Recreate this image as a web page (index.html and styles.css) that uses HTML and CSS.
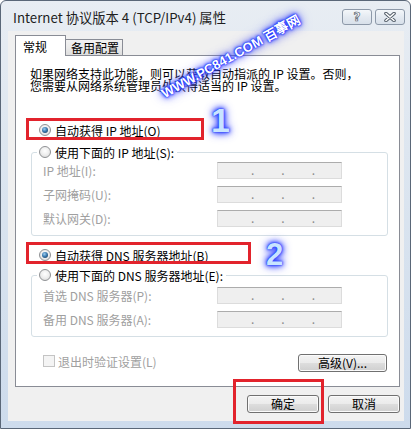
FILE: index.html
```html
<!DOCTYPE html>
<html lang="zh-CN">
<head>
  <meta charset="UTF-8">
  <title>Internet 协议版本 4 (TCP/IPv4) 属性</title>
  <link rel="stylesheet" href="styles.css">
</head>
<body>

<div class="window">
  <div class="titlebar">
    <span class="title">Internet 协议版本 4 (TCP/IPv4) 属性</span>
    <div class="title-btns">
      <span class="tbtn tbtn-help">?</span>
      <span class="tbtn">
        <svg width="14" height="10" viewBox="0 0 14 10">
          <path d="M3 1.5 L11 8.5 M11 1.5 L3 8.5" stroke="#56606c" stroke-width="3.6" stroke-linecap="round"/>
          <path d="M3 1.5 L11 8.5 M11 1.5 L3 8.5" stroke="#fff" stroke-width="1.6" stroke-linecap="round"/>
        </svg>
      </span>
    </div>
  </div>

  <div class="client">
    <div class="tabs">
      <span class="tab active">常规</span>
      <span class="tab">备用配置</span>
    </div>

    <div class="panel">
      <p class="intro">如果网络支持此功能，则可以获取自动指派的 IP 设置。否则，<br>您需要从网络系统管理员处获得适当的 IP 设置。</p>

      <div class="radio-row"><span class="radio checked"></span>自动获得 IP 地址(O)</div>

      <div class="group">
        <div class="legend"><span class="radio"></span>使用下面的 IP 地址(S):</div>
        <div class="rows">
          <div class="field-row">
            <span class="field-label">IP 地址(I):</span>
            <span class="field"><i>.</i><i>.</i><i>.</i></span>
          </div>
          <div class="field-row">
            <span class="field-label">子网掩码(U):</span>
            <span class="field"><i>.</i><i>.</i><i>.</i></span>
          </div>
          <div class="field-row">
            <span class="field-label">默认网关(D):</span>
            <span class="field"><i>.</i><i>.</i><i>.</i></span>
          </div>
        </div>
      </div>

      <div class="radio-row dns-auto"><span class="radio checked"></span>自动获得 DNS 服务器地址(B)</div>

      <div class="group group-dns">
        <div class="legend"><span class="radio"></span>使用下面的 DNS 服务器地址(E):</div>
        <div class="rows">
          <div class="field-row">
            <span class="field-label">首选 DNS 服务器(P):</span>
            <span class="field"><i>.</i><i>.</i><i>.</i></span>
          </div>
          <div class="field-row">
            <span class="field-label">备用 DNS 服务器(A):</span>
            <span class="field"><i>.</i><i>.</i><i>.</i></span>
          </div>
        </div>
      </div>

      <div class="check-row">
        <span class="check-item"><span class="checkbox"></span>退出时验证设置(L)</span>
        <button class="btn btn-adv">高级(V)...</button>
      </div>
    </div>

    <div class="dialog-btns">
      <button class="btn">确定</button>
      <button class="btn">取消</button>
    </div>
  </div>

  <!-- annotations drawn over the dialog -->
  <div class="mark mark-1"></div>
  <div class="mark mark-2"></div>
  <div class="mark mark-3"></div>
  <span class="step step-1">1</span>
  <span class="step step-2">2</span>
  <span class="watermark">WWW.PC841.COM 百事网</span>
</div>

</body>
</html>
```

FILE: styles.css
```css
* {
  box-sizing: border-box;
}

body {
  margin: 0;
  background: #fff;
  font-family: "Noto Sans CJK SC", "Noto Sans", sans-serif;
  font-size: 12px;
  color: #000;
}

.window {
  position: relative;
  width: 411px;
  height: 429px;
  border: 1px solid #5a6778;
  border-radius: 6px 6px 0 0;
  background: linear-gradient(180deg, #e8edf3 0%, #dde6f0 35%, #cddbec 100%);
  overflow: hidden;
}

.titlebar {
  display: flex;
  justify-content: space-between;
  align-items: flex-start;
  height: 30px;
  padding: 8px 5px 0 12px;
}

.title {
  font-size: 13.3px;
  line-height: 17px;
  color: #1e1e1e;
  white-space: nowrap;
}

.title-btns {
  display: flex;
  gap: 3px;
}

.tbtn {
  display: flex;
  align-items: center;
  justify-content: center;
  width: 30px;
  height: 16px;
  border: 1px solid #8c98a8;
  border-radius: 3px;
  background: linear-gradient(180deg, #f4f7fa 0%, #e4eaf1 50%, #d8e0ea 100%);
}

.tbtn-help {
  font-family: "DejaVu Sans", sans-serif;
  font-weight: bold;
  font-size: 12px;
  line-height: 14px;
  color: #fff;
  -webkit-text-stroke: 0.7px #56606c;
}

/* client area */
.client {
  width: 396px;
  height: 390px;
  margin-left: 7px;
  padding: 4px 4px 0 7px;
  background: #f0f0f0;
}

.tabs {
  display: flex;
  align-items: flex-end;
  height: 20px;
}

.tab {
  display: flex;
  align-items: center;
  height: 16px;
  padding-left: 5px;
  width: 57px;
  border: 1px solid #898c95;
  border-left: 0;
  border-bottom: 0;
  background: linear-gradient(180deg, #f2f2f2 0%, #ebebeb 50%, #dddddd 100%);
  white-space: nowrap;
}

.tab.active {
  position: relative;
  z-index: 1;
  width: 51px;
  height: 21px;
  margin-bottom: -1px;
  padding-left: 7px;
  border-left: 1px solid #898c95;
  background: #fff;
}

.panel {
  width: 385px;
  padding: 12px 11px 14px 15px;
  border: 1px solid #898c95;
  background: #fff;
}

.intro {
  margin: 0 0 0 -1px;
  line-height: 12px;
  white-space: nowrap;
}

.radio-row {
  display: flex;
  align-items: center;
  height: 14px;
  margin-top: 31px;
  padding-left: 8px;
  white-space: nowrap;
}

.radio-row.dns-auto {
  margin-top: 12px;
}

.radio {
  position: relative;
  width: 12px;
  height: 12px;
  margin-right: 4px;
  border: 1px solid #8f9194;
  border-radius: 50%;
  background: radial-gradient(circle at 50% 40%, #ffffff 0%, #eeeeee 50%, #d4d4d4 100%);
}

.radio.checked::after {
  content: "";
  position: absolute;
  left: 2px;
  top: 2px;
  width: 6px;
  height: 6px;
  border-radius: 50%;
  background: radial-gradient(circle at 40% 35%, #9fd0f2 0%, #3c7bb0 45%, #122d4a 100%);
}

.group {
  margin-top: 15px;
  padding: 0 0 8px 11px;
  border: 1px solid #d5dfe5;
  border-radius: 3px;
}

.group-dns {
  margin-top: 13px;
}

.legend {
  display: flex;
  align-items: center;
  width: fit-content;
  height: 14px;
  margin: -8px 0 0 -6px;
  padding: 0 3px 0 2px;
  background: #fff;
  white-space: nowrap;
}

.rows {
  display: flex;
  flex-direction: column;
  gap: 7px;
  margin-top: 3px;
}

.group-dns .rows {
  margin-top: 5px;
}

.field-row {
  display: flex;
  align-items: center;
}

.field-label {
  width: 174px;
  color: #a0a0a0;
  white-space: nowrap;
}

.field {
  display: flex;
  gap: 27px;
  width: 125px;
  height: 17px;
  padding-left: 33px;
  border: 1px solid #dcdcdc;
  border-top-color: #acacac;
  background: #efefef;
  line-height: 13px;
  color: #8a8a8a;
}

.field i {
  font-style: normal;
}

.check-row {
  display: flex;
  justify-content: space-between;
  align-items: flex-start;
  margin-top: 17px;
}

.check-item {
  display: flex;
  align-items: center;
  height: 14px;
  padding-left: 12px;
  color: #a0a0a0;
  white-space: nowrap;
}

.checkbox {
  width: 12px;
  height: 12px;
  margin-right: 3px;
  border: 1px solid #c4c4c4;
  background: #f4f4f4;
}

.btn {
  width: 72px;
  height: 18px;
  padding: 0;
  border: 1px solid #707070;
  border-radius: 3px;
  background: linear-gradient(180deg, #f3f3f3 0%, #ebebeb 48%, #dddddd 52%, #cfcfcf 100%);
  box-shadow: inset 0 0 0 1px #fbfbfb;
  font-family: "Noto Sans CJK SC", "Noto Sans", sans-serif;
  font-size: 12px;
  line-height: 14px;
  color: #000;
}

.btn-adv {
  width: 89px;
  margin-right: 1px;
}

.dialog-btns {
  display: flex;
  justify-content: flex-end;
  gap: 9px;
  margin-top: 8px;
}

/* red boxes, numbers and watermark lying over the dialog */
.mark {
  position: absolute;
  border: 3px solid #e2232c;
}

.mark-1 {
  left: 25px;
  top: 117px;
  width: 178px;
  height: 22px;
}

.mark-2 {
  left: 25px;
  top: 241px;
  width: 225px;
  height: 22px;
}

.mark-3 {
  left: 232px;
  top: 378px;
  width: 91px;
  height: 45px;
}

.step {
  position: absolute;
  font-family: "Liberation Sans", sans-serif;
  font-weight: bold;
  line-height: 1;
  color: #c8e4ff;
  text-shadow: 0 0 1px #1a30ff, 0 0 2px #2a40ff, 0 0 4px #3048ff, 0 0 6px #4050ff, 0 0 9px #6a70ff, 0 0 12px #9098ff;
}

.step-1 {
  left: 210px;
  top: 102px;
  font-size: 34px;
}

.step-2 {
  left: 265px;
  top: 238px;
  font-size: 31px;
}

.watermark {
  position: absolute;
  left: 152px;
  top: 49px;
  font-family: "Liberation Sans", sans-serif;
  font-weight: bold;
  font-size: 13px;
  line-height: 14px;
  color: #fff;
  white-space: nowrap;
  transform: rotate(-29deg);
  text-shadow: 0 0 1px #1028ff, 0 0 2px #1a30ff, 0 0 3px #2038ff, 0 0 5px #3040ff, 0 0 8px #5058ff, 0 0 12px #7a7cff;
}
```
